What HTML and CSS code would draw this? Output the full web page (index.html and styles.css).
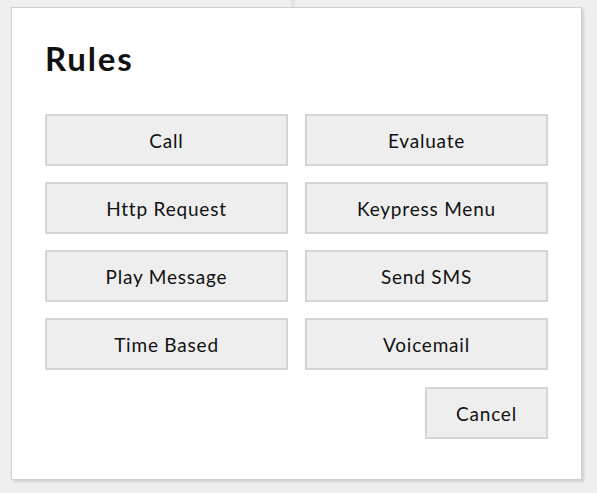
FILE: index.html
```html
<!DOCTYPE html>
<html>
<head>
<meta charset="utf-8">
<link rel="stylesheet" href="styles.css">
</head>
<body>
<div class="backdrop">
  <div class="pane pane-left"></div>
  <div class="pane pane-right"></div>
</div>
<div class="dialog">
  <h1 class="title">Rules</h1>
  <div class="rules">
    <button class="btn">Call</button>
    <button class="btn">Evaluate</button>
    <button class="btn">Http Request</button>
    <button class="btn">Keypress Menu</button>
    <button class="btn">Play Message</button>
    <button class="btn">Send SMS</button>
    <button class="btn">Time Based</button>
    <button class="btn">Voicemail</button>
  </div>
  <div class="actions">
    <button class="btn btn-cancel">Cancel</button>
  </div>
</div>
</body>
</html>
```
FILE: styles.css
```css
html, body {
  margin: 0;
  padding: 0;
  height: 100%;
}
body {
  background: #efefef;
  font-family: Lato, "Noto Sans", sans-serif;
  color: #111;
  overflow: hidden;
}
.backdrop {
  display: grid;
  grid-template-columns: 295px 1fr;
  height: 10px;
}
.pane-left {
  border-right: 4px solid #e2e2e2;
}
.dialog {
  position: absolute;
  left: 11px;
  top: 7px;
  width: 571px;
  height: 473px;
  box-sizing: border-box;
  background: #fff;
  border: 1px solid #cfcfcf;
  box-shadow: 2px 2px 2px rgba(0,0,0,0.12);
  padding: 30px 33px 0 33px;
}
.title {
  margin: 0 0 36px 0;
  font-size: 33px;
  font-weight: 700;
  line-height: 40px;
  letter-spacing: 1.8px;
  color: #111;
}
.rules {
  display: grid;
  grid-template-columns: 243px 243px;
  grid-auto-rows: 52px;
  column-gap: 17px;
  row-gap: 16px;
}
.btn {
  box-sizing: border-box;
  background: #eeeeee;
  border: 2px solid #d5d5d5;
  font-family: Lato, "Noto Sans", sans-serif;
  font-size: 19px;
  letter-spacing: 0.8px;
  color: #111;
  padding: 0;
  margin: 0;
}
.actions {
  display: flex;
  justify-content: flex-end;
  margin-top: 17px;
}
.btn-cancel {
  width: 123px;
  height: 52px;
}
```
